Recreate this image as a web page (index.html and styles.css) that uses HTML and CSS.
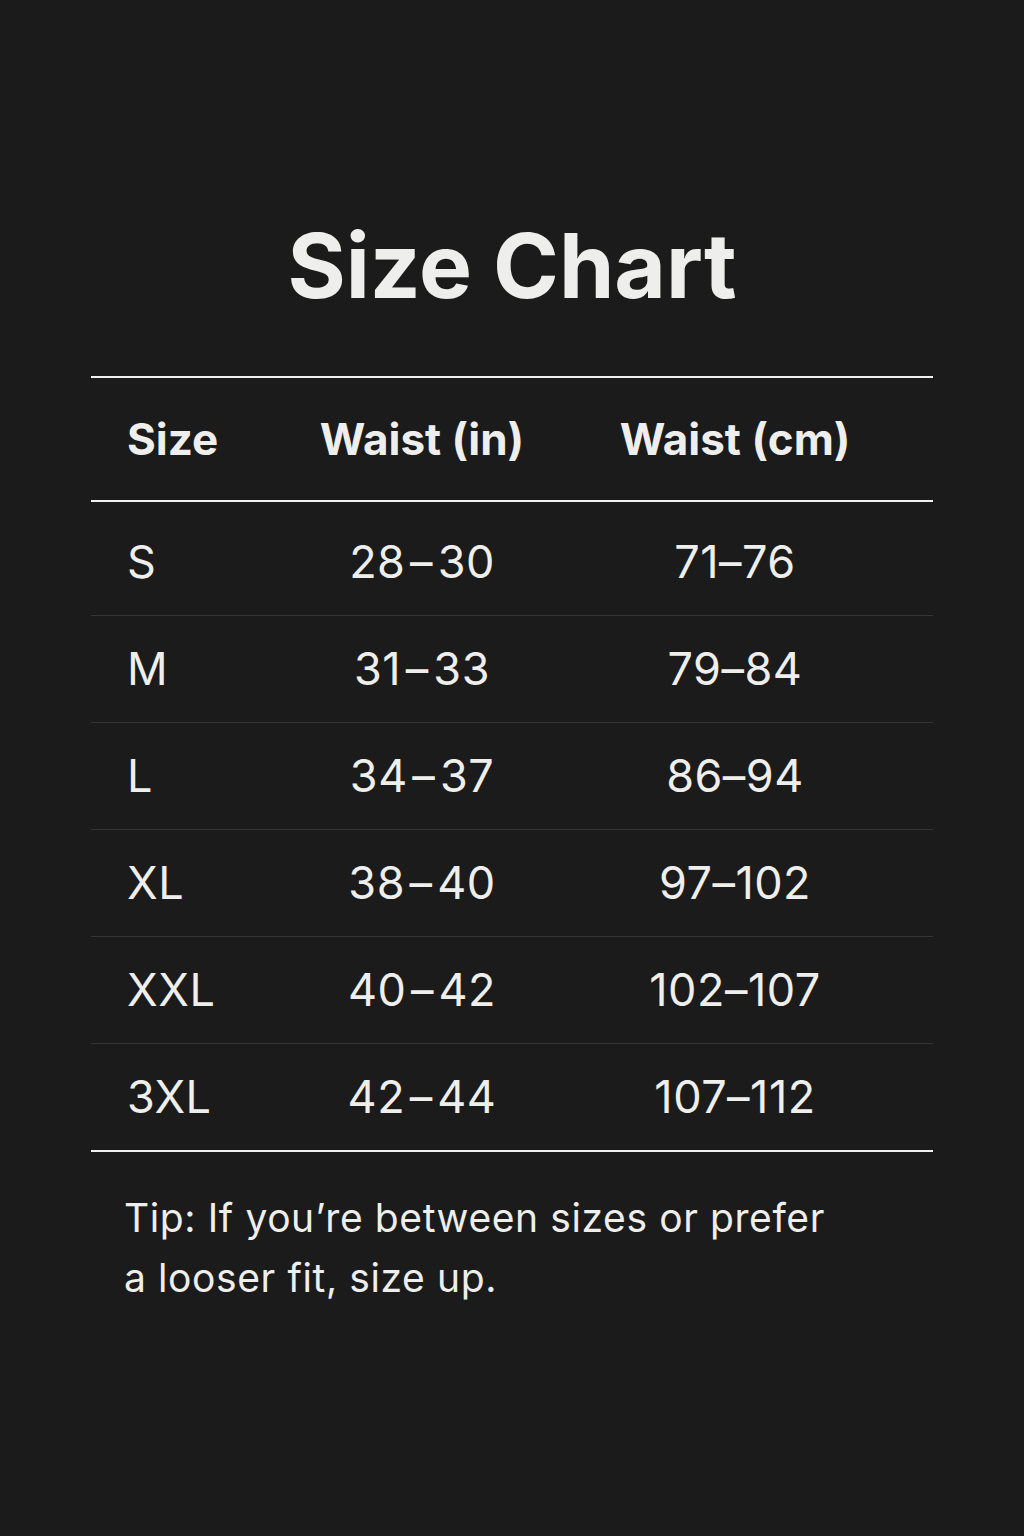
FILE: index.html
```html
<!DOCTYPE html>
<html lang="en">
<head>
<meta charset="utf-8">
<title>Size Chart</title>
<link rel="stylesheet" href="styles.css">
</head>
<body>
<main class="page">
  <h1 class="title">Size Chart</h1>
  <div class="chart">
    <div class="row head">
      <div class="cell first">Size</div>
      <div class="cell">Waist (in)</div>
      <div class="cell">Waist (cm)</div>
    </div>
    <div class="row body top">
      <div class="cell first">S</div>
      <div class="cell">28&#8202;–&#8202;30</div>
      <div class="cell">71–76</div>
    </div>
    <div class="row body">
      <div class="cell first">M</div>
      <div class="cell">31&#8202;–&#8202;33</div>
      <div class="cell">79–84</div>
    </div>
    <div class="row body">
      <div class="cell first">L</div>
      <div class="cell">34&#8202;–&#8202;37</div>
      <div class="cell">86–94</div>
    </div>
    <div class="row body">
      <div class="cell first">XL</div>
      <div class="cell">38&#8202;–&#8202;40</div>
      <div class="cell">97–102</div>
    </div>
    <div class="row body">
      <div class="cell first">XXL</div>
      <div class="cell">40&#8202;–&#8202;42</div>
      <div class="cell">102–107</div>
    </div>
    <div class="row body last">
      <div class="cell first">3XL</div>
      <div class="cell">42&#8202;–&#8202;44</div>
      <div class="cell">107–112</div>
    </div>
  </div>
  <p class="tip">Tip: If you’re between sizes or prefer<br>a looser fit, size up.</p>
</main>
</body>
</html>
```

FILE: styles.css
```css
html, body {
  margin: 0;
  padding: 0;
  background: #1b1b1b;
}

body {
  color: #eeeeec;
  font-family: Inter, "Noto Sans", "Liberation Sans", sans-serif;
  min-height: 1536px;
}

.page {
  width: 842px;
  margin-left: 91px;
  padding-top: 213px;
}

.title {
  margin: 0;
  text-align: center;
  font-size: 89px;
  line-height: 1.2;
  font-weight: 700;
}

.chart {
  margin-top: 56px;
  border-top: 2px solid #f0f0f0;
  border-bottom: 2px solid #f0f0f0;
}

.row {
  display: grid;
  grid-template-columns: 200px 262px 364px 1fr;
  align-items: center;
}

.cell {
  text-align: center;
  white-space: nowrap;
}

.cell.first {
  text-align: left;
  padding-left: 36px;
}

.head {
  height: 122px;
  border-bottom: 2px solid #f0f0f0;
  font-size: 44px;
  font-weight: 700;
}

.body {
  height: 106px;
  font-size: 45px;
  letter-spacing: 0.5px;
  font-weight: 400;
  border-bottom: 1px solid #343434;
}

.body.top {
  height: 114px;
  padding-top: 6px;
  box-sizing: border-box;
}

.body.last {
  border-bottom: none;
}

.tip {
  margin: 36px 0 0 0;
  padding-left: 33px;
  font-size: 39px;
  letter-spacing: 0.6px;
  line-height: 60px;
  font-weight: 400;
}
```
